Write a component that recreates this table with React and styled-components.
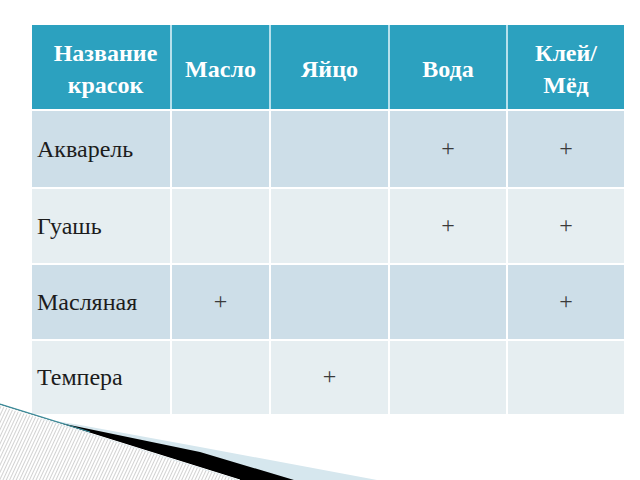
import React from "react";
import styled, { createGlobalStyle } from "styled-components";

const GlobalStyle = createGlobalStyle`
  html, body {
    margin: 0;
    padding: 0;
    background: #ffffff;
  }
  body {
    font-family: "Liberation Serif", "Times New Roman", serif;
  }
`;

const columns = ["Масло", "Яйцо", "Вода", "Клей/\nМёд"];

const rows = [
  { name: "Акварель", marks: [false, false, true, true], height: 76 },
  { name: "Гуашь", marks: [false, false, true, true], height: 74 },
  { name: "Масляная", marks: [true, false, false, true], height: 74 },
  { name: "Темпера", marks: [false, true, false, false], height: 73 },
];

const App = () => {
  return (
    <>
      <GlobalStyle />
      <Slide>
        <Table>
          <HeaderRow>
            <HeaderCell $first>
              Название
              <br />
              красок
            </HeaderCell>
            {columns.map((col) => (
              <HeaderCell key={col}>
                {col.split("\n").map((line, i) => (
                  <React.Fragment key={line}>
                    {i > 0 && <br />}
                    {line}
                  </React.Fragment>
                ))}
              </HeaderCell>
            ))}
          </HeaderRow>
          {rows.map((row, r) => (
            <BodyRow key={row.name} $height={row.height}>
              <NameCell $odd={r % 2 === 0}>{row.name}</NameCell>
              {row.marks.map((mark, i) => (
                <MarkCell key={i} $odd={r % 2 === 0}>
                  {mark ? "+" : ""}
                </MarkCell>
              ))}
            </BodyRow>
          ))}
        </Table>
        <Swoosh viewBox="0 0 640 80" preserveAspectRatio="none">
          <defs>
            <pattern
              id="hatch"
              width="3"
              height="3"
              patternUnits="userSpaceOnUse"
              patternTransform="rotate(25)"
            >
              <rect width="3" height="3" fill="#ffffff" />
              <rect width="1" height="3" fill="#d2d2d2" />
            </pattern>
          </defs>
          <path d="M0 12 L80 25 L200 47 L377 80 L0 80 Z" fill="#d6e7ee" />
          <path d="M0 4 L60 23 L200 52 L294 80 L240 80 L0 5 Z" fill="#000000" />
          <path d="M0 6 L240 81 L0 81 Z" fill="url(#hatch)" />
          <path d="M0 5 L240 80" stroke="#ffffff" strokeWidth="1" fill="none" />
          <path d="M0 4 L90 32" stroke="#3b8d9c" strokeWidth="1.2" fill="none" />
        </Swoosh>
      </Slide>
    </>
  );
};

const Slide = styled.div`
  position: relative;
  width: 640px;
  height: 480px;
  overflow: hidden;
  background: #ffffff;
  padding: 25px 0 0 32px;
  box-sizing: border-box;
`;

const Table = styled.div`
  display: flex;
  flex-direction: column;
  gap: 2px;
  width: 592px;
`;

const gridColumns = "138px 97px 117px 116px 116px";

const HeaderRow = styled.div`
  display: grid;
  grid-template-columns: ${gridColumns};
  column-gap: 2px;
  height: 84px;
  background: #b6e0ec;
`;

const HeaderCell = styled.div`
  display: flex;
  align-items: center;
  justify-content: center;
  text-align: center;
  background: #2ca1bf;
  color: #ffffff;
  font-weight: bold;
  font-size: 24px;
  line-height: 32px;
  padding-left: ${({ $first }) => ($first ? "9px" : "0")};
  padding-top: 4px;
`;

const BodyRow = styled.div`
  display: grid;
  grid-template-columns: ${gridColumns};
  column-gap: 2px;
  height: ${({ $height }) => $height}px;
`;

const Cell = styled.div`
  display: flex;
  align-items: center;
  background: ${({ $odd }) => ($odd ? "#cddee8" : "#e6eef1")};
  color: #1c1c1c;
  font-size: 24px;
`;

const NameCell = styled(Cell)`
  padding-left: 5px;
`;

const MarkCell = styled(Cell)`
  justify-content: center;
  color: #3a3a3a;
  padding-bottom: 2px;
`;

const Swoosh = styled.svg`
  position: absolute;
  left: 0;
  bottom: 0;
  width: 640px;
  height: 80px;
  display: block;
`;

export default App;
